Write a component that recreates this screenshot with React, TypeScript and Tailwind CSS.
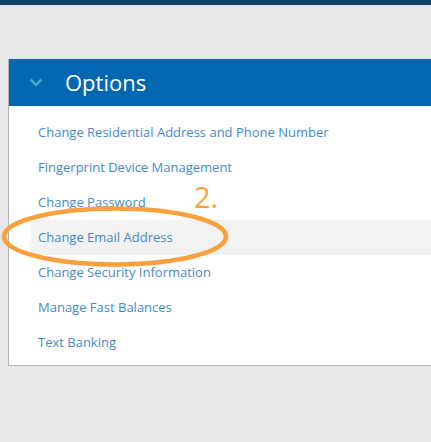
const items = [
  'Change Residential Address and Phone Number',
  'Fingerprint Device Management',
  'Change Password',
  'Change Email Address',
  'Change Security Information',
  'Manage Fast Balances',
  'Text Banking',
]

export default function App() {
  return (
    <div className="relative min-h-[442px] w-full overflow-hidden bg-[#e7e7e7] font-['Open_Sans',sans-serif]">
      <div className="h-[5px] bg-[#11436a]" />

      {/* Options panel */}
      <div className="ml-[8px] mt-[54px] w-[440px] border-b border-l border-[#b3b3b3] bg-white">
        <div className="flex h-[47px] items-center bg-[#0467b1]">
          <svg width="14" height="9" viewBox="0 0 14 9" className="ml-[20px]" fill="none">
            <path d="M1.5 1.5L7 7L12.5 1.5" stroke="#3fa6c4" strokeWidth="2.6" />
          </svg>
          <span className="ml-[22px] pb-[2px] text-[22px] leading-none text-white">Options</span>
        </div>
        <ul className="pb-[5px] pt-[9px]">
          {items.map((item, i) => (
            <li
              key={item}
              className={`ml-[22px] flex h-[35px] items-center pl-[7px] text-[13px] text-[#4589c7] ${i === 3 ? 'bg-[#f2f2f2]' : ''}`}
            >
              {item}
            </li>
          ))}
        </ul>
      </div>

      {/* annotation */}
      <span className="absolute left-[194px] top-[182px] text-[29px] leading-none text-[#f7a13c]">2.</span>
      <svg className="absolute left-0 top-[200px]" width="240" height="75" viewBox="0 0 240 75" fill="none">
        <ellipse cx="115" cy="36.5" rx="111" ry="28" stroke="#f7a13c" strokeWidth="4.5" />
      </svg>
    </div>
  )
}
